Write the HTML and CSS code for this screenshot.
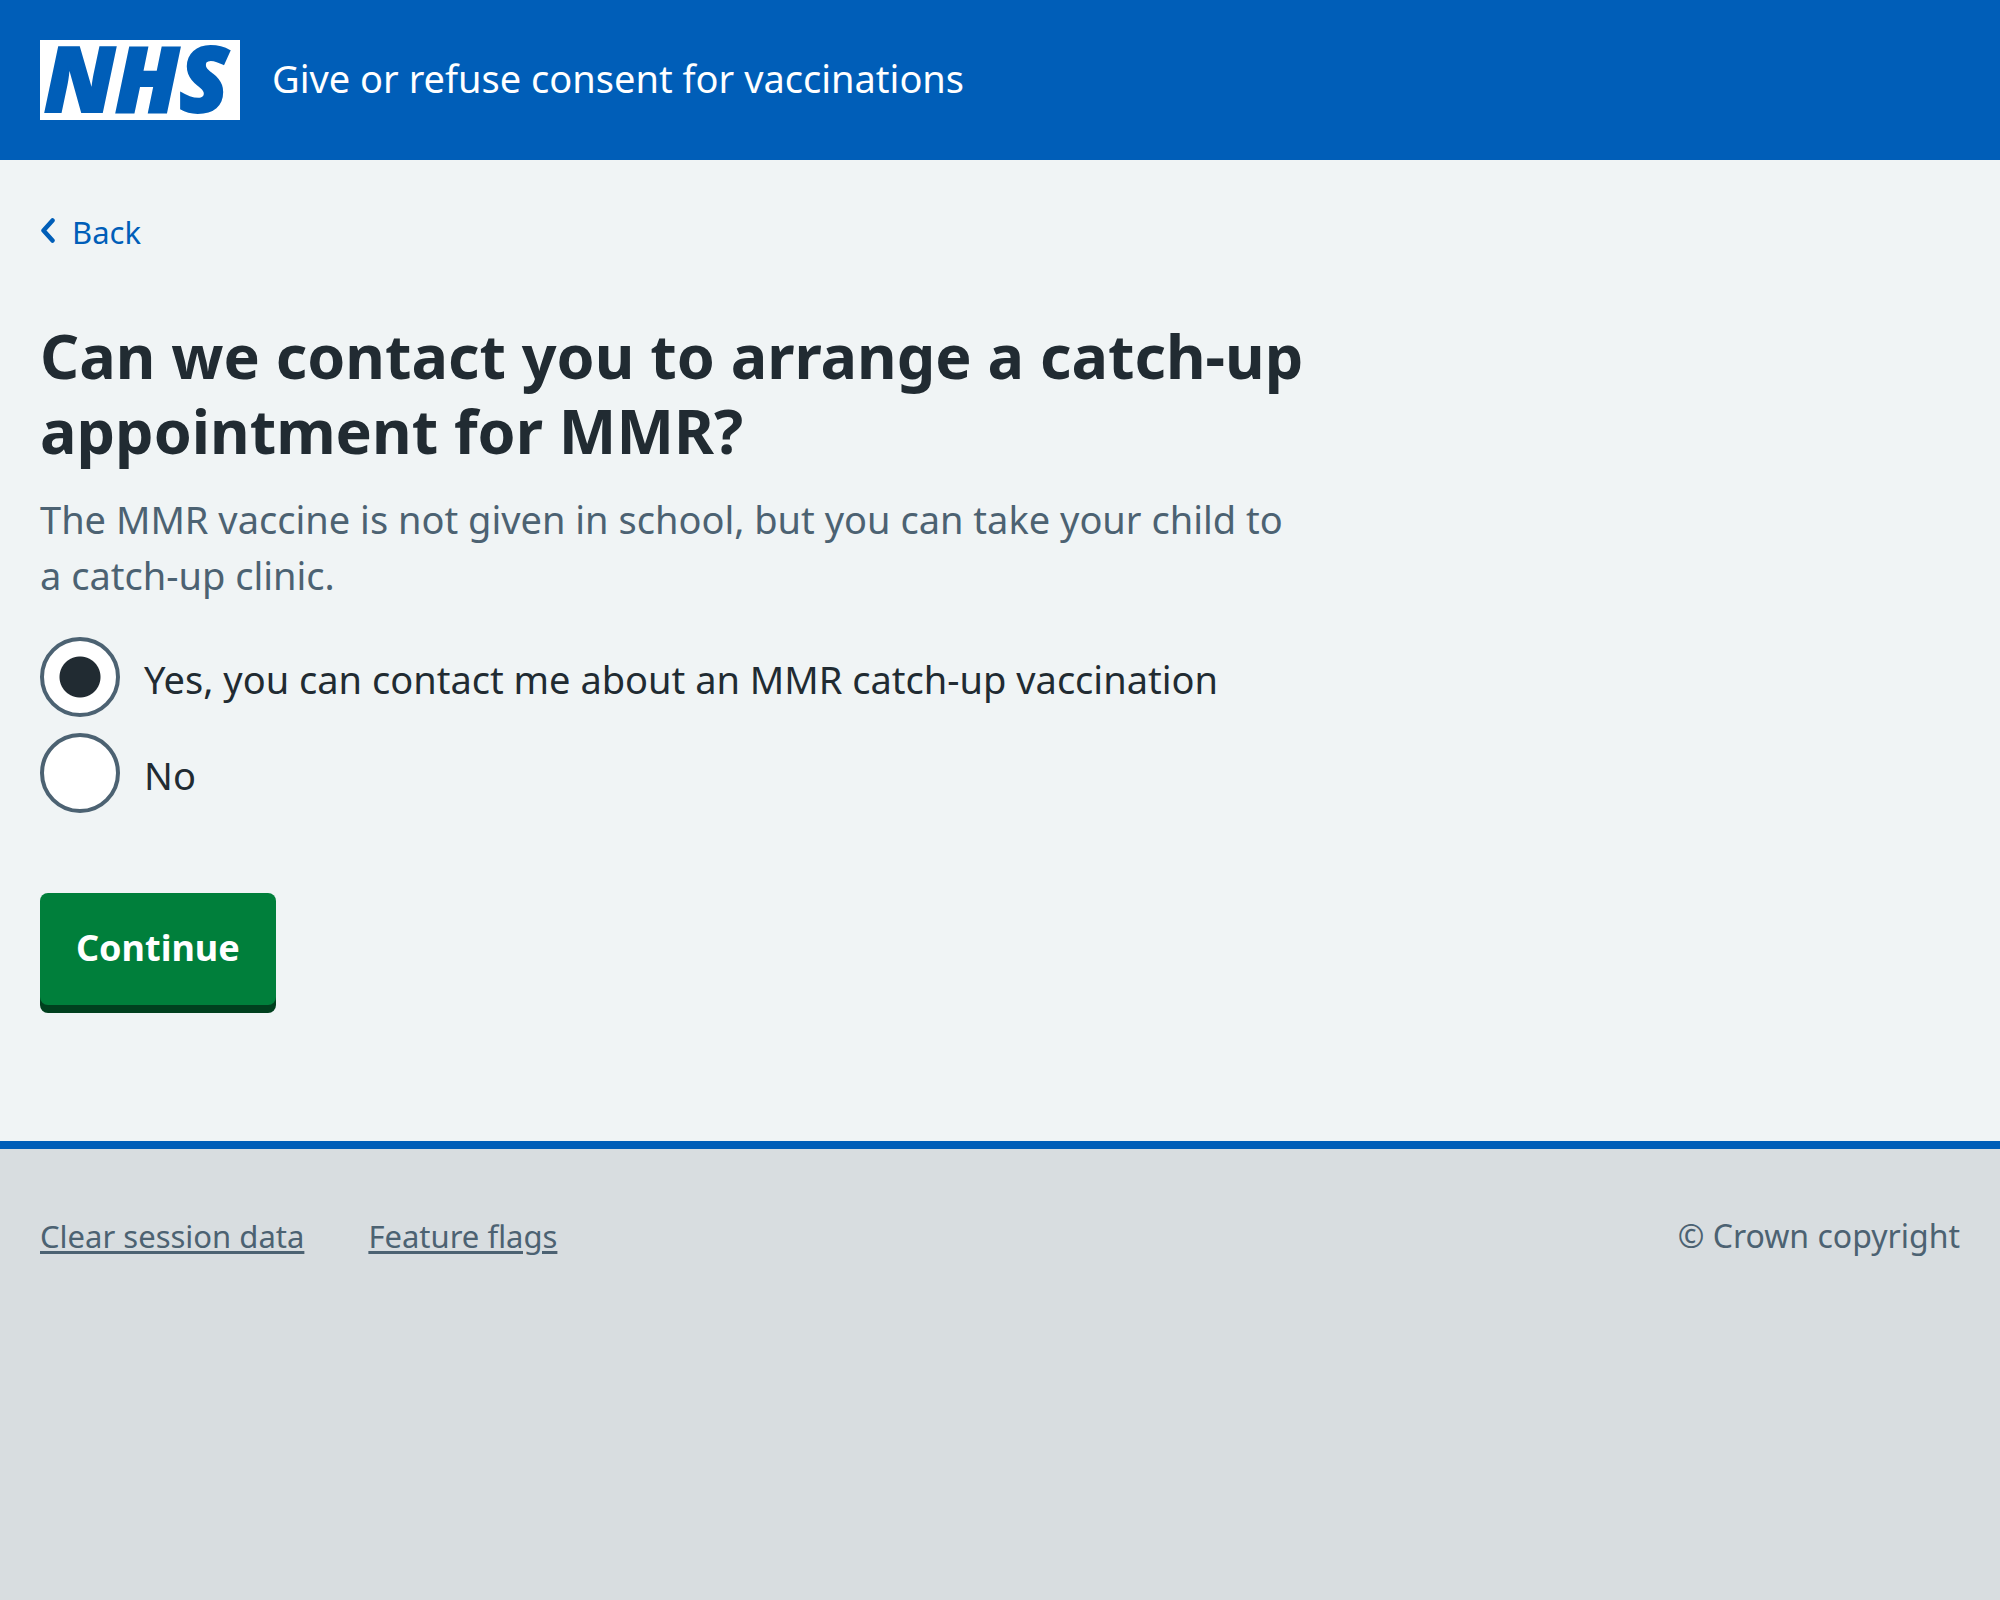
FILE: index.html
```html
<!DOCTYPE html>
<html lang="en">
<head>
<meta charset="utf-8">
<meta name="viewport" content="width=device-width, initial-scale=1">
<title>Can we contact you to arrange a catch-up appointment for MMR?</title>
<link rel="stylesheet" href="styles.css">
</head>
<body>
<header class="header">
  <a class="header-link" href="#">
    <svg class="logo" viewBox="0 0 200 80" role="img" aria-label="NHS">
      <rect width="200" height="80" fill="#fff"/>
      <text class="logo-text" x="4" y="72">NHS</text>
    </svg>
    <span class="service-name">Give or refuse consent for vaccinations</span>
  </a>
</header>
<main class="main">
  <a class="back-link" href="#">
    <svg class="back-icon" viewBox="0 0 16 28" aria-hidden="true">
      <path d="M12.500 2.500 L3.500 12.500 L12.500 22.500" fill="none" stroke="currentColor" stroke-width="4.500" stroke-linecap="round" stroke-linejoin="round"/>
    </svg>
    Back
  </a>
  <form class="form">
    <fieldset class="fieldset" aria-describedby="hint">
      <legend class="legend"><h1 class="heading">Can we contact you to arrange a catch-up appointment for MMR?</h1></legend>
      <p class="hint" id="hint">The MMR vaccine is not given in school, but you can take your child to a catch-up clinic.</p>
      <div class="radios">
        <div class="radio-item">
          <input class="radio" type="radio" name="contact" id="contact-yes" value="yes" checked>
          <label class="radio-label" for="contact-yes">Yes, you can contact me about an MMR catch-up vaccination</label>
        </div>
        <div class="radio-item">
          <input class="radio" type="radio" name="contact" id="contact-no" value="no">
          <label class="radio-label" for="contact-no">No</label>
        </div>
      </div>
    </fieldset>
    <button class="button" type="button">Continue</button>
  </form>
</main>
<footer class="footer">
  <ul class="footer-links">
    <li><a class="footer-link" href="#">Clear session data</a></li>
    <li><a class="footer-link" href="#">Feature flags</a></li>
  </ul>
  <p class="copyright">© Crown copyright</p>
</footer>
</body>
</html>
```
FILE: styles.css
```css
* {
  box-sizing: border-box;
}

body {
  margin: 0;
  min-height: 100vh;
  display: flex;
  flex-direction: column;
  background: #f0f4f5;
  color: #212b32;
  font-family: "Noto Sans", "Open Sans", sans-serif;
  font-size: 38px;
  line-height: 56px;
}

.header {
  padding: 40px;
  background: #005eb8;
}

.header-link {
  display: flex;
  align-items: center;
  gap: 32px;
  color: #fff;
  text-decoration: none;
}

.logo {
  width: 200px;
  height: 80px;
  flex: none;
  overflow: visible;
}

.logo-text {
  fill: #005eb8;
  stroke: #005eb8;
  stroke-width: 2px;
  font-size: 90px;
  font-style: italic;
  font-weight: 900;
}

.service-name {
  padding-bottom: 4px;
}

.main {
  padding: 48px 40px 128px;
}

.back-link {
  display: flex;
  align-items: center;
  gap: 16px;
  width: fit-content;
  color: #005eb8;
  font-size: 31px;
  line-height: 48px;
  text-decoration: none;
}

.back-icon {
  width: 16px;
  height: 28px;
}

.form {
  max-width: 1268px;
  margin-top: 62px;
}

.fieldset {
  min-width: 0;
  margin: 0;
  padding: 0;
  border: 0;
}

.legend {
  padding: 0;
}

.heading {
  margin: 0 0 23px;
  font-size: 61px;
  font-weight: 700;
  line-height: 75px;
}

.hint {
  margin: 0 0 34px;
  color: #4c6272;
}

.radios {
  display: grid;
  gap: 16px;
}

.radio-item {
  display: flex;
  align-items: flex-start;
  gap: 24px;
}

.radio {
  appearance: none;
  flex: none;
  width: 80px;
  height: 80px;
  margin: 0;
  border: 4px solid #4c6272;
  border-radius: 50%;
  background: #fff;
}

.radio:checked {
  background: radial-gradient(circle, #212b32 20px, #fff 21px);
}

.radio-label {
  padding-top: 14px;
}

.button {
  margin: 80px 0 8px;
  padding: 27px 36px 29px;
  border: 0;
  border-radius: 8px;
  background: #007f3b;
  box-shadow: 0 8px 0 #00401e;
  color: #fff;
  font: inherit;
  font-size: 36px;
  font-weight: 700;
}

.footer {
  flex: 1;
  display: flex;
  align-items: flex-start;
  justify-content: space-between;
  padding: 63px 40px;
  border-top: 8px solid #005eb8;
  background: #d8dde0;
  color: #4c6272;
  font-size: 31px;
  line-height: 48px;
}

.footer-links {
  display: flex;
  gap: 64px;
  margin: 0;
  padding: 0;
  list-style: none;
}

.footer-link {
  color: inherit;
  text-decoration-thickness: 3px;
  text-underline-offset: 3px;
}

.copyright {
  margin: 0;
  font-size: 32px;
}
```
